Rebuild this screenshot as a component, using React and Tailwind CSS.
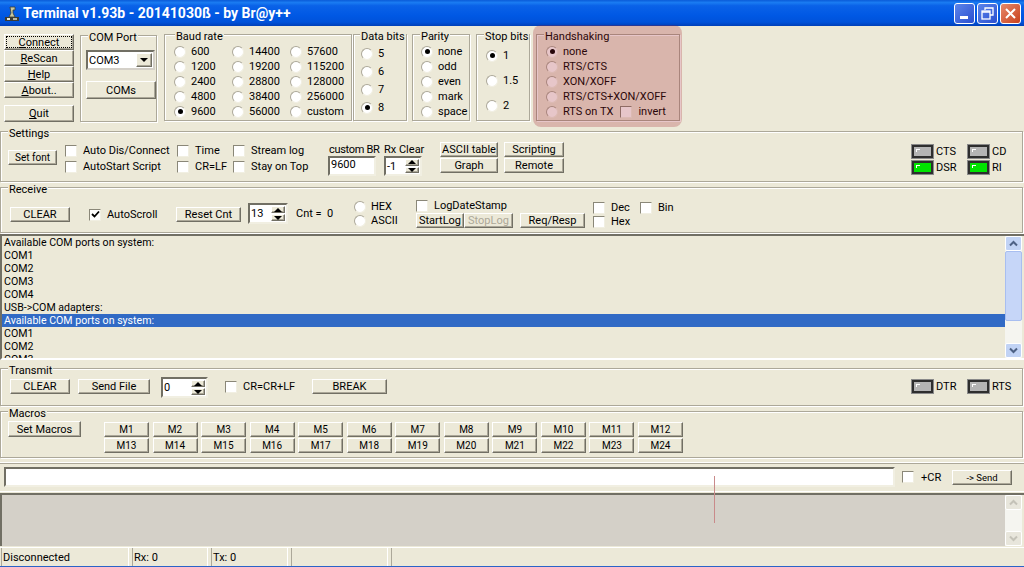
import React from 'react';

const btnCls = 'flex items-center justify-center bg-[#ece9d8] border border-t-white border-l-white border-r-[#716f64] border-b-[#716f64] shadow-[inset_-1px_-1px_0_#aca899] shrink-0 whitespace-nowrap';

const Btn = ({ w, h = 'h-[15px]', children, className = '' }) => (
  <div className={`${btnCls} ${w} ${h} ${className}`}>{children}</div>
);

const Radio = ({ checked, label, className = '' }) => (
  <div className={`flex items-center h-[15px] ${className}`}>
    <span className="relative w-[12px] h-[12px] rounded-full bg-white border border-t-[#aca899] border-l-[#aca899] border-r-[#f1efe2] border-b-[#f1efe2] shrink-0 flex items-center justify-center">
      {checked && <span className="w-[5px] h-[5px] rounded-full bg-black" />}
    </span>
    <span className="ml-[5px] whitespace-nowrap">{label}</span>
  </div>
);

const Check = ({ checked, label, gap = 'ml-[6px]' }) => (
  <div className="flex items-center h-[13px]">
    <span className="w-[12px] h-[12px] bg-white border border-t-[#8a8778] border-l-[#8a8778] border-r-[#f1efe2] border-b-[#f1efe2] shrink-0 flex items-center justify-center">
      {checked && (
        <svg width="9" height="9" viewBox="0 0 9 9">
          <path d="M1 4l2.5 2.5L8 1.5" fill="none" stroke="#000" strokeWidth="1.8" />
        </svg>
      )}
    </span>
    {label && <span className={`${gap} whitespace-nowrap`}>{label}</span>}
  </div>
);

const Group = ({ title, w = '', h, className = '', children, legendLeft = 'left-[7px]' }) => (
  <div className={`relative border border-[#aca899] shadow-[inset_1px_1px_0_#fff,1px_1px_0_#fff] shrink-0 ${w} ${h} ${className}`}>
    <span className={`absolute -top-[5px] ${legendLeft} px-[1px] bg-[#ece9d8] whitespace-nowrap`}>{title}</span>
    {children}
  </div>
);

const Arrows = () => (
  <div className="w-[14px] h-full flex flex-col gap-[1px] shrink-0">
    <div className={`${btnCls} w-full flex-1`}>
      <span className="w-0 h-0 border-x-[4px] border-x-transparent border-b-[4px] border-b-black" />
    </div>
    <div className={`${btnCls} w-full flex-1`}>
      <span className="w-0 h-0 border-x-[4px] border-x-transparent border-t-[4px] border-t-black" />
    </div>
  </div>
);

const Spinner = ({ value, w, h }) => (
  <div className={`flex items-center bg-white border-2 border-t-[#716f64] border-l-[#716f64] border-r-[#f1efe2] border-b-[#f1efe2] pr-[1px] py-[1px] ${w} ${h}`}>
    <span className="flex-1 pl-[1px]">{value}</span>
    <Arrows />
  </div>
);

const Led = ({ on, label }) => (
  <div className="flex items-center h-[13px] w-[56px]">
    <span className={`relative w-[21px] h-[13px] border-2 border-[#2e2e2e] shadow-[0_0_0_1px_#8a8a8a] shrink-0 ${on ? 'bg-[#00e400]' : 'bg-[#b4b4b4]'}`}>
      <span className="absolute left-[2px] top-[2px] w-[4px] h-[1px] bg-white" />
      <span className="absolute left-[2px] top-[2px] w-[1px] h-[3px] bg-white" />
    </span>
    <span className="ml-[3px]">{label}</span>
  </div>
);

const Chevron = ({ up, color = '#4d6185' }) => (
  <svg width="9" height="7" viewBox="0 0 9 7">
    <path d={up ? 'M1 5.5l3.5-3.5L8 5.5' : 'M1 1.5l3.5 3.5L8 1.5'} fill="none" stroke={color} strokeWidth="2" />
  </svg>
);

const baud = [
  ['600', '14400', '57600'],
  ['1200', '19200', '115200'],
  ['2400', '28800', '128000'],
  ['4800', '38400', '256000'],
  ['9600', '56000', 'custom'],
];

const memoLines = [
  'Available COM ports on system:',
  'COM1',
  'COM2',
  'COM3',
  'COM4',
  'USB->COM adapters:',
  'Available COM ports on system:',
  'COM1',
  'COM2',
  'COM3',
];

const macroRow = (from) => Array.from({ length: 12 }, (_, i) => `M${from + i}`);

const TitleBar = () => (
  <div className="h-[26px] shrink-0 flex items-center bg-[linear-gradient(to_bottom,#0a5bd8_0%,#1a7cf2_10%,#0a62e8_22%,#0058e4_60%,#0052da_85%,#0040b8_100%)]">
    <svg className="ml-[4px] shrink-0" width="16" height="18" viewBox="0 0 16 18">
      <rect x="1" y="13" width="14" height="4" fill="#3c3c34" />
      <rect x="3" y="14" width="3" height="2" fill="#e8e8d8" />
      <rect x="9" y="14" width="4" height="2" fill="#b8b8a8" />
      <path d="M6 3h5v3H9v3l2 4H5l2-4z" fill="#c8c8a0" stroke="#3c3c30" strokeWidth="0.8" />
    </svg>
    <span className="ml-[3px] text-white font-bold text-[14px] font-['Roboto',sans-serif] whitespace-nowrap">
      Terminal v1.93b - 20141030ß - by Br@y++
    </span>
    <div className="ml-auto mr-[3px] flex gap-[2px]">
      <div className="w-[21px] h-[21px] rounded-[3px] border border-white bg-[linear-gradient(135deg,#5c85ea,#2a4fd0)] flex items-end pl-[5px] pb-[4px]">
        <span className="w-[8px] h-[3px] bg-white" />
      </div>
      <div className="w-[21px] h-[21px] rounded-[3px] border border-white bg-[linear-gradient(135deg,#5c85ea,#2a4fd0)] flex items-center justify-center">
        <svg width="13" height="13" viewBox="0 0 13 13">
          <path d="M4 3V1h8v7h-3" fill="none" stroke="#fff" strokeWidth="1.3" />
          <rect x="1" y="4" width="8" height="8" fill="none" stroke="#fff" strokeWidth="1.3" />
          <path d="M1 5h8" stroke="#fff" strokeWidth="1.5" />
        </svg>
      </div>
      <div className="w-[21px] h-[21px] rounded-[3px] border border-white bg-[linear-gradient(135deg,#e88a6c,#c8401c)] flex items-center justify-center">
        <svg width="13" height="13" viewBox="0 0 13 13">
          <path d="M2 2l9 9M11 2l-9 9" stroke="#fff" strokeWidth="2" />
        </svg>
      </div>
    </div>
  </div>
);

const TopRow = () => (
  <div className="h-[100px] shrink-0 flex pt-[8px]">
    <div className="ml-[4px] w-[70px] flex flex-col shrink-0 text-center">
      <div className={`${btnCls} w-full h-[16px] border-black p-[1px]`}>
        <span className="w-full h-full border border-dotted border-black flex items-center justify-center">
          <span><u>C</u>onnect</span>
        </span>
      </div>
      <Btn w="w-full" h="h-[16px]"><span><u>R</u>eScan</span></Btn>
      <Btn w="w-full" h="h-[16px]"><span><u>H</u>elp</span></Btn>
      <Btn w="w-full" h="h-[16px]"><span><u>A</u>bout..</span></Btn>
      <Btn w="w-full" h="h-[17px]" className="mt-[7px]"><span><u>Q</u>uit</span></Btn>
    </div>

    <Group title="COM Port" w="w-[77px]" h="h-[87px]" className="ml-[6px] mt-[1px]">
      <div className="mt-[14px] ml-[5px] w-[69px] h-[20px] flex items-center bg-white border-2 border-t-[#716f64] border-l-[#716f64] border-r-[#d4d0c8] border-b-[#d4d0c8] pr-[1px] py-[1px]">
        <span className="flex-1 pl-[1px]">COM3</span>
        <div className={`${btnCls} w-[16px] h-full`}>
          <span className="w-0 h-0 border-x-[4px] border-x-transparent border-t-[4px] border-t-black" />
        </div>
      </div>
      <Btn w="w-[70px]" h="h-[18px]" className="ml-[5px] mt-[11px]">COMs</Btn>
    </Group>

    <Group title="Baud rate" w="w-[188px]" h="h-[87px]" className="ml-[7px]" legendLeft="left-[10px]">
      <div className="grid grid-cols-[58px_58px_58px] ml-[9px] mt-[9px]">
        {baud.flat().map((b) => (
          <Radio key={b} label={b} checked={b === '9600'} />
        ))}
      </div>
    </Group>

    <Group title="Data bits" w="w-[54px]" h="h-[87px]" className="ml-[1px]" legendLeft="left-[6px]">
      <div className="ml-[7px] mt-[11px] flex flex-col gap-[3px]">
        {['5', '6', '7', '8'].map((b) => (
          <Radio key={b} label={b} checked={b === '8'} />
        ))}
      </div>
    </Group>

    <Group title="Parity" w="w-[58px]" h="h-[87px]" className="ml-[5px]" legendLeft="left-[7px]">
      <div className="ml-[8px] mt-[9px] flex flex-col">
        {['none', 'odd', 'even', 'mark', 'space'].map((b) => (
          <Radio key={b} label={b} checked={b === 'none'} />
        ))}
      </div>
    </Group>

    <Group title="Stop bits" w="w-[54px]" h="h-[87px]" className="ml-[6px]" legendLeft="left-[7px]">
      <div className="ml-[9px] mt-[13px] flex flex-col gap-[10px]">
        {['1', '1.5', '2'].map((b) => (
          <Radio key={b} label={b} checked={b === '1'} />
        ))}
      </div>
    </Group>

    <Group title="Handshaking" w="w-[144px]" h="h-[87px]" className="ml-[6px]" legendLeft="left-[7px]">
      <div className="ml-[9px] mt-[9px] flex flex-col">
        <Radio label="none" checked />
        <Radio label="RTS/CTS" />
        <Radio label="XON/XOFF" />
        <Radio label="RTS/CTS+XON/XOFF" />
        <div className="flex items-center">
          <Radio label="RTS on TX" />
          <span className="ml-[7px]"><Check label="invert" /></span>
        </div>
      </div>
    </Group>
  </div>
);

const Settings = () => (
  <Group title="Settings" w="w-[1023px]" h="h-[51px]" className="mt-[5px] flex">
    <Btn w="w-[49px]" className="ml-[7px] mt-[18px] text-[10px]">Set font</Btn>
    <div className="ml-[8px] mt-[12px] w-[112px] shrink-0 flex flex-col gap-[3px]">
      <Check label="Auto Dis/Connect" />
      <Check label="AutoStart Script" />
    </div>
    <div className="mt-[12px] w-[56px] shrink-0 flex flex-col gap-[3px]">
      <Check label="Time" />
      <Check label="CR=LF" />
    </div>
    <div className="mt-[12px] w-[95px] shrink-0 flex flex-col gap-[3px]">
      <Check label="Stream log" />
      <Check label="Stay on Top" />
    </div>
    <div className="mt-[11px] w-[56px] shrink-0">
      <div className="ml-[1px] whitespace-nowrap tracking-[-0.3px]">custom BR</div>
      <div className="w-[48px] h-[20px] bg-white border-2 border-t-[#716f64] border-l-[#716f64] border-r-[#f1efe2] border-b-[#f1efe2] pl-[1px]">9600</div>
    </div>
    <div className="mt-[11px] w-[56px] shrink-0">
      <div className="whitespace-nowrap">Rx Clear</div>
      <Spinner value="-1" w="w-[38px]" h="h-[20px]" />
    </div>
    <div className="mt-[10px] grid grid-cols-[58px_60px] gap-x-[6px] gap-y-[1px] h-[31px] shrink-0">
      <Btn w="w-full">ASCII table</Btn>
      <Btn w="w-full">Scripting</Btn>
      <Btn w="w-full">Graph</Btn>
      <Btn w="w-full">Remote</Btn>
    </div>
    <div className="ml-auto mr-[-2px] mt-[13px] grid grid-cols-[56px_56px] gap-y-[3px] h-[29px]">
      <Led label="CTS" />
      <Led label="CD" />
      <Led on label="DSR" />
      <Led on label="RI" />
    </div>
  </Group>
);

const Receive = () => (
  <Group title="Receive" w="w-[1023px]" h="h-[46px]" className="mt-[5px] flex">
    <Btn w="w-[60px]" className="ml-[9px] mt-[19px]">CLEAR</Btn>
    <div className="ml-[19px] mt-[20px] w-[87px] shrink-0"><Check checked label="AutoScroll" /></div>
    <Btn w="w-[65px]" className="mt-[19px]">Reset Cnt</Btn>
    <div className="ml-[7px] mt-[15px]"><Spinner value="13" w="w-[40px]" h="h-[21px]" /></div>
    <div className="ml-[8px] mt-[19px] w-[50px] shrink-0 whitespace-nowrap">Cnt =&nbsp; 0</div>
    <div className="ml-[8px] mt-[11px] w-[62px] shrink-0 flex flex-col -space-y-[1px]">
      <Radio label="HEX" />
      <Radio label="ASCII" />
    </div>
    <div className="mt-[11px] w-[104px] shrink-0 flex flex-col">
      <Check label="LogDateStamp" />
      <div className="flex mt-[1px]">
        <Btn w="w-[48px]">StartLog</Btn>
        <Btn w="w-[49px]" className="text-[#aca899]">StopLog</Btn>
      </div>
    </div>
    <Btn w="w-[65px]" className="mt-[25px]">Req/Resp</Btn>
    <div className="ml-[8px] mt-[13px] w-[47px] shrink-0 flex flex-col gap-[1px]">
      <Check label="Dec" />
      <Check label="Hex" />
    </div>
    <div className="mt-[13px]"><Check label="Bin" /></div>
  </Group>
);

const Memo = () => (
  <div className="mt-[1px] h-[126px] shrink-0 flex border-l-2 border-t-2 border-[#716f64] border-b-2 border-b-white">
    <div className="flex-1 overflow-hidden text-[10.6px]">
      {memoLines.map((line, i) => (
        <div key={i} className={`h-[13px] pl-[2px] leading-[13px] ${i === 6 ? 'bg-[#316ac5] text-white' : ''}`}>
          {line}
        </div>
      ))}
    </div>
    <div className="w-[17px] mr-[2px] shrink-0 flex flex-col bg-[#f5f5f0]">
      <div className="h-[15px] shrink-0 rounded-[2px] bg-[#c1d3f5] border border-white flex items-center justify-center">
        <Chevron up />
      </div>
      <div className="h-[70px] shrink-0 rounded-[2px] bg-[#c6d6f8] border border-[#a8bef0]" />
      <div className="flex-1" />
      <div className="h-[15px] shrink-0 rounded-[2px] bg-[#c1d3f5] border border-white flex items-center justify-center">
        <Chevron />
      </div>
    </div>
  </div>
);

const Transmit = () => (
  <Group title="Transmit" w="w-[1023px]" h="h-[38px]" className="mt-[8px] flex">
    <Btn w="w-[60px]" className="ml-[9px] mt-[10px]">CLEAR</Btn>
    <Btn w="w-[72px]" className="ml-[8px] mt-[10px]">Send File</Btn>
    <div className="ml-[11px] mt-[8px]"><Spinner value="0" w="w-[47px]" h="h-[21px]" /></div>
    <div className="ml-[17px] mt-[11px] w-[87px] shrink-0"><Check label="CR=CR+LF" /></div>
    <Btn w="w-[75px]" className="mt-[10px]">BREAK</Btn>
    <div className="ml-auto mr-[-2px] mt-[11px] grid grid-cols-[56px_56px] h-[13px]">
      <Led label="DTR" />
      <Led label="RTS" />
    </div>
  </Group>
);

const Macros = () => (
  <Group title="Macros" w="w-[1023px]" h="h-[47px]" className="mt-[5px] flex">
    <Btn w="w-[73px]" h="h-[16px]" className="ml-[7px] mt-[9px]">Set Macros</Btn>
    <div className="ml-[23px] mt-[10px] flex flex-col gap-[1px] text-[10px]">
      {[1, 13].map((from) => (
        <div key={from} className="flex gap-[3.55px]">
          {macroRow(from).map((m) => (
            <Btn key={m} w="w-[45px]">{m}</Btn>
          ))}
        </div>
      ))}
    </div>
  </Group>
);

const InputRow = () => (
  <div className="mt-[4px] h-[30px] shrink-0 flex items-center border-t border-b border-white shadow-[inset_0_1px_0_#aca899]">
    <div className="ml-[4px] w-[891px] h-[20px] bg-white border-2 border-t-[#716f64] border-l-[#716f64] border-r-[#f1efe2] border-b-[#f1efe2] shrink-0" />
    <div className="ml-[7px] w-[50px] shrink-0"><Check label="+CR" gap="ml-[7px]" /></div>
    <Btn w="w-[60px]" className="text-[9.5px]">-&gt; Send</Btn>
  </div>
);

const GreyPane = () => (
  <div className="mt-[1px] h-[53px] shrink-0 flex border-l-2 border-t-2 border-[#716f64]">
    <div className="flex-1 bg-[#d4d0c8]" />
    <div className="w-[17px] mr-[2px] shrink-0 flex flex-col justify-between bg-[#f5f5f0]">
      <div className="h-[15px] rounded-[2px] bg-[#e8e6dc] border border-white flex items-center justify-center">
        <Chevron up color="#c4c2b8" />
      </div>
      <div className="h-[15px] rounded-[2px] bg-[#e8e6dc] border border-white flex items-center justify-center">
        <Chevron color="#c4c2b8" />
      </div>
    </div>
  </div>
);

const StatusBar = () => (
  <div className="mt-[1px] h-[19px] shrink-0 flex gap-[3px] pl-[1px] border-t border-white">
    <div className="w-[128px] border-l border-[#aca899] border-r-white border-r pl-[1px] pt-[3px]">Disconnected</div>
    <div className="w-[76px] border-l border-[#aca899] border-r-white border-r pl-[1px] pt-[3px]">Rx: 0</div>
    <div className="w-[77px] border-l border-[#aca899] border-r-white border-r pl-[1px] pt-[3px]">Tx: 0</div>
    <div className="w-[97px] border-l border-[#aca899] border-r-white border-r" />
    <div className="flex-1 border-l border-[#aca899]" />
  </div>
);

export default function App() {
  return (
    <div className="relative w-[1024px] h-[567px] overflow-hidden flex flex-col bg-[#ece9d8] text-black text-[11px] leading-[13px] font-['Roboto','Liberation_Sans',sans-serif]">
      <TitleBar />
      <TopRow />
      <Settings />
      <Receive />
      <Memo />
      <Transmit />
      <Macros />
      <InputRow />
      <GreyPane />
      <StatusBar />
      <div className="h-[1px] bg-[#2a63c8] shrink-0" />
      {/* highlight drawn over the handshaking box */}
      <div className="absolute left-[533px] top-[25px] w-[149px] h-[102px] rounded-[8px] bg-[#a01d28]/25" />
      <div className="absolute left-[714px] top-[476px] w-[1px] h-[47px] bg-[#c98a8a]" />
    </div>
  );
}
